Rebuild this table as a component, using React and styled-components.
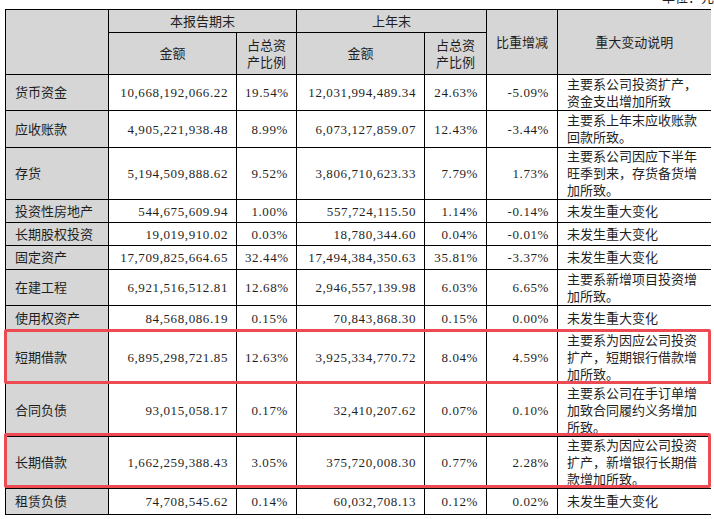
import React from 'react'
import styled, { createGlobalStyle } from 'styled-components'

const GlobalStyle = createGlobalStyle`
  body {
    margin: 0;
    background: #fff;
    color: #1f1f1f;
    font-family: "Liberation Serif", "Noto Sans CJK SC", serif;
  }
`

const HEAD_H = [23, 42]
const COLS = [103, 128, 60, 128, 62, 71, 153]

const rows = [
  { name: '货币资金', cur: '10,668,192,066.22', curPct: '19.54%', prev: '12,031,994,489.34', prevPct: '24.63%', diff: '-5.09%', note: '主要系公司投资扩产，资金支出增加所致', h: 36 },
  { name: '应收账款', cur: '4,905,221,938.48', curPct: '8.99%', prev: '6,073,127,859.07', prevPct: '12.43%', diff: '-3.44%', note: '主要系上年末应收账款回款所致。', h: 37 },
  { name: '存货', cur: '5,194,509,888.62', curPct: '9.52%', prev: '3,806,710,623.33', prevPct: '7.79%', diff: '1.73%', note: '主要系公司因应下半年旺季到来，存货备货增加所致。', h: 52 },
  { name: '投资性房地产', cur: '544,675,609.94', curPct: '1.00%', prev: '557,724,115.50', prevPct: '1.14%', diff: '-0.14%', note: '未发生重大变化', h: 23 },
  { name: '长期股权投资', cur: '19,019,910.02', curPct: '0.03%', prev: '18,780,344.60', prevPct: '0.04%', diff: '-0.01%', note: '未发生重大变化', h: 23 },
  { name: '固定资产', cur: '17,709,825,664.65', curPct: '32.44%', prev: '17,494,384,350.63', prevPct: '35.81%', diff: '-3.37%', note: '未发生重大变化', h: 24 },
  { name: '在建工程', cur: '6,921,516,512.81', curPct: '12.68%', prev: '2,946,557,139.98', prevPct: '6.03%', diff: '6.65%', note: '主要系新增项目投资增加所致。', h: 36 },
  { name: '使用权资产', cur: '84,568,086.19', curPct: '0.15%', prev: '70,843,868.30', prevPct: '0.15%', diff: '0.00%', note: '未发生重大变化', h: 26 },
  { name: '短期借款', cur: '6,895,298,721.85', curPct: '12.63%', prev: '3,925,334,770.72', prevPct: '8.04%', diff: '4.59%', note: '主要系为因应公司投资扩产，短期银行借款增加所致。', h: 51, mark: true },
  { name: '合同负债', cur: '93,015,058.17', curPct: '0.17%', prev: '32,410,207.62', prevPct: '0.07%', diff: '0.10%', note: '主要系公司在手订单增加致合同履约义务增加所致。', h: 53 },
  { name: '长期借款', cur: '1,662,259,388.43', curPct: '3.05%', prev: '375,720,008.30', prevPct: '0.77%', diff: '2.28%', note: '主要系为因应公司投资扩产，新增银行长期借款增加所致。', h: 51, mark: true },
  { name: '租赁负债', cur: '74,708,545.62', curPct: '0.14%', prev: '60,032,708.13', prevPct: '0.12%', diff: '0.02%', note: '未发生重大变化', h: 26 },
]

const Page = styled.div`
  width: 714px;
  height: 519px;
  overflow: hidden;
`

// "单位：元" sits above the table, mostly cropped off the top
const Unit = styled.div`
  height: 9px;
  overflow: hidden;
  text-align: right;
  font-size: 13px;
  line-height: 13px;

  span {
    display: block;
    margin-top: -9px;
  }
`

const Frame = styled.div`
  position: relative;
  padding-left: 5px;
`

const Sheet = styled.table`
  border-collapse: collapse;
  table-layout: fixed;
  width: 705px;
  font-size: 13px;
  line-height: 17px;
`

const Row = styled.tr`
  height: ${props => props.$h}px;
`

const HeadCell = styled.th`
  border: 1px solid #000;
  border-right: ${props => (props.$last ? 'none' : '1px solid #000')};
  background: #d6d6d6;
  font-weight: 400;
  text-align: center;
  vertical-align: middle;
  padding: 0 8px;
`

const Cell = styled.td`
  border: 1px solid #000;
  border-right: ${props => (props.$last ? 'none' : '1px solid #000')};
  background: ${props => (props.$shade ? '#d6d6d6' : '#fff')};
  text-align: ${props => props.$align || 'right'};
  vertical-align: middle;
  padding: 0 8px 0 ${props => (props.$align === 'left' ? '9px' : '8px')};
  overflow: hidden;
`

const Num = styled.span`
  letter-spacing: 0.6px;
  white-space: nowrap;
`

const Mark = styled.div`
  position: absolute;
  left: 4px;
  width: 707px;
  box-sizing: border-box;
  border: 3px solid #ec4b53;
  border-radius: 2px;
  pointer-events: none;
`

export default function App() {
  const headTotal = HEAD_H[0] + HEAD_H[1]
  let offset = headTotal
  const marks = []
  rows.forEach(r => {
    if (r.mark) marks.push({ top: offset - 2, height: r.h + 4 })
    offset += r.h
  })

  return (
    <Page>
      <GlobalStyle />
      <Unit>
        <span>单位：元</span>
      </Unit>
      <Frame>
        <Sheet>
          <colgroup>
            {COLS.map((w, i) => (
              <col key={i} style={{ width: w }} />
            ))}
          </colgroup>
          <thead>
            <Row $h={HEAD_H[0]}>
              <HeadCell rowSpan={2} />
              <HeadCell colSpan={2}>本报告期末</HeadCell>
              <HeadCell colSpan={2}>上年末</HeadCell>
              <HeadCell rowSpan={2}>比重增减</HeadCell>
              <HeadCell rowSpan={2} $last>
                重大变动说明
              </HeadCell>
            </Row>
            <Row $h={HEAD_H[1]}>
              <HeadCell>金额</HeadCell>
              <HeadCell>占总资产比例</HeadCell>
              <HeadCell>金额</HeadCell>
              <HeadCell>占总资产比例</HeadCell>
            </Row>
          </thead>
          <tbody>
            {rows.map(r => (
              <Row key={r.name} $h={r.h}>
                <Cell $shade $align="left">
                  {r.name}
                </Cell>
                <Cell>
                  <Num>{r.cur}</Num>
                </Cell>
                <Cell>
                  <Num>{r.curPct}</Num>
                </Cell>
                <Cell>
                  <Num>{r.prev}</Num>
                </Cell>
                <Cell>
                  <Num>{r.prevPct}</Num>
                </Cell>
                <Cell>
                  <Num>{r.diff}</Num>
                </Cell>
                <Cell $align="left" $last>
                  {r.note}
                </Cell>
              </Row>
            ))}
          </tbody>
        </Sheet>
        {marks.map(m => (
          <Mark key={m.top} style={{ top: m.top, height: m.height }} />
        ))}
      </Frame>
    </Page>
  )
}
